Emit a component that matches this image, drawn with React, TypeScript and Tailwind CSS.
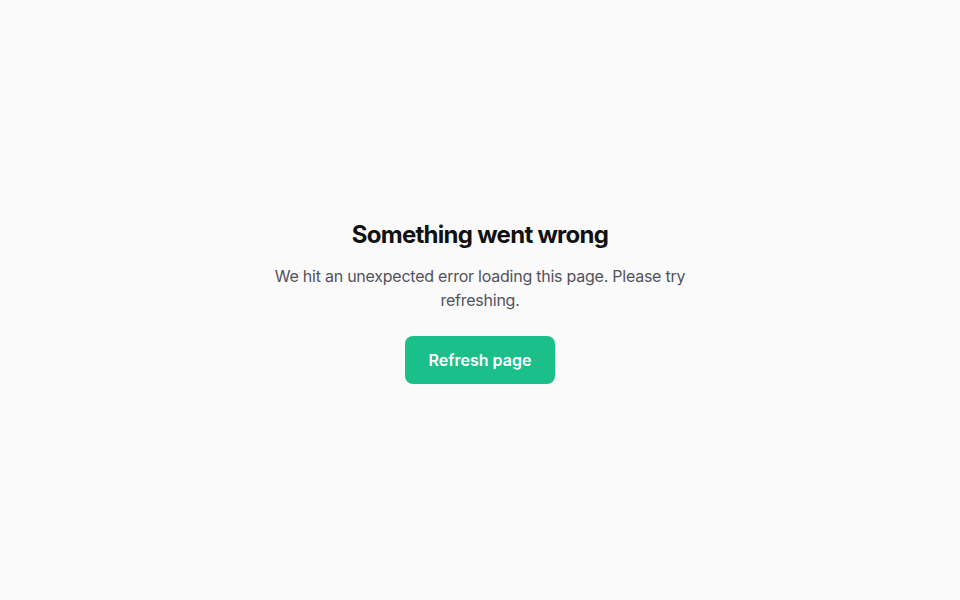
export default function App() {
  return (
    <div
      className="flex min-h-screen items-center justify-center bg-[#fafafa] px-6 pt-[3px]"
      style={{ fontFamily: "Inter, 'Noto Sans', sans-serif" }}
    >
      <div className="flex max-w-[440px] flex-col items-center text-center">
        <h1 className="text-[24px] font-bold leading-8 tracking-[-0.03em] text-[#111111]">
          Something went wrong
        </h1>
        <p className="mt-[13px] text-[16px] leading-6 tracking-[-0.015em] text-[#52525b]">
          We hit an unexpected error loading this page. Please try refreshing.
        </p>
        <button
          type="button"
          onClick={() => window.location.reload()}
          className="mt-6 h-12 w-[150px] rounded-lg bg-[#1bbf8a] text-[16px] font-semibold text-white"
        >
          Refresh page
        </button>
      </div>
    </div>
  );
}
